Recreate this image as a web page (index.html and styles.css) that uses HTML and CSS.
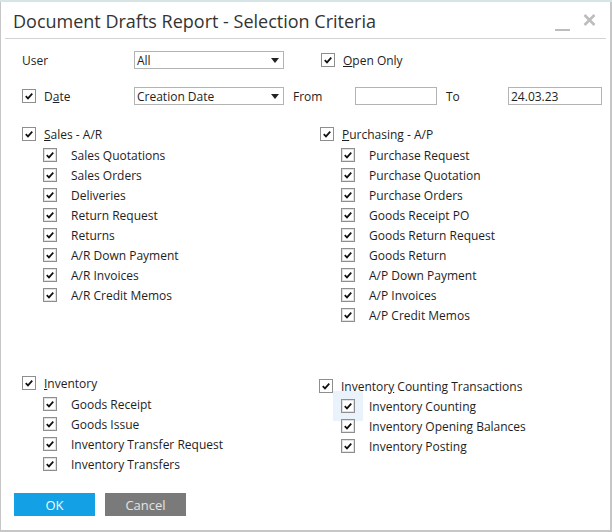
FILE: index.html
```html
<!DOCTYPE html>
<html>
<head>
<meta charset="utf-8">
<link rel="stylesheet" href="styles.css">
</head>
<body>
<div class="window">
  <div class="titlebar">
    <div class="title">Document Drafts Report - Selection Criteria</div>
    <div class="controls">
      <svg class="min" width="15" height="4" viewBox="0 0 15 4"><path d="M0 2h15"/></svg>
      <svg class="close" width="13" height="12" viewBox="0 0 13 12"><path d="M1.5 1l10 10M11.5 1l-10 10"/></svg>
    </div>
  </div>
  <div class="sep"></div>
  <div class="content">
    <div class="field-row row1">
      <span class="lead">User</span>
      <div class="select"><span>All</span><i class="arrow"></i></div>
      <div class="chk open-only"><span class="cb"><svg viewBox="0 0 14 14"><path d="M3.2 7.2l2.6 2.6 5-5.6"/></svg></span><span><u>O</u>pen Only</span></div>
    </div>
    <div class="field-row row2">
      <div class="lead chk"><span class="cb"><svg viewBox="0 0 14 14"><path d="M3.2 7.2l2.6 2.6 5-5.6"/></svg></span><span>D<u>a</u>te</span></div>
      <div class="select"><span>Creation Date</span><i class="arrow"></i></div>
      <span class="lbl">From</span>
      <div class="input from"></div>
      <span class="lbl">To</span>
      <div class="input to">24.03.23</div>
    </div>

    <div class="sections">
      <div class="group">
        <div class="chk head"><span class="cb"><svg viewBox="0 0 14 14"><path d="M3.2 7.2l2.6 2.6 5-5.6"/></svg></span><span><u>S</u>ales - A/R</span></div>
        <div class="items">
          <div class="chk item"><span class="cb sub"><svg viewBox="0 0 14 14"><path d="M3.2 7.2l2.6 2.6 5-5.6"/></svg></span><span>Sales Quotations</span></div>
          <div class="chk item"><span class="cb sub"><svg viewBox="0 0 14 14"><path d="M3.2 7.2l2.6 2.6 5-5.6"/></svg></span><span>Sales Orders</span></div>
          <div class="chk item"><span class="cb sub"><svg viewBox="0 0 14 14"><path d="M3.2 7.2l2.6 2.6 5-5.6"/></svg></span><span>Deliveries</span></div>
          <div class="chk item"><span class="cb sub"><svg viewBox="0 0 14 14"><path d="M3.2 7.2l2.6 2.6 5-5.6"/></svg></span><span>Return Request</span></div>
          <div class="chk item"><span class="cb sub"><svg viewBox="0 0 14 14"><path d="M3.2 7.2l2.6 2.6 5-5.6"/></svg></span><span>Returns</span></div>
          <div class="chk item"><span class="cb sub"><svg viewBox="0 0 14 14"><path d="M3.2 7.2l2.6 2.6 5-5.6"/></svg></span><span>A/R Down Payment</span></div>
          <div class="chk item"><span class="cb sub"><svg viewBox="0 0 14 14"><path d="M3.2 7.2l2.6 2.6 5-5.6"/></svg></span><span>A/R Invoices</span></div>
          <div class="chk item"><span class="cb sub"><svg viewBox="0 0 14 14"><path d="M3.2 7.2l2.6 2.6 5-5.6"/></svg></span><span>A/R Credit Memos</span></div>
        </div>
      </div>
      <div class="group right">
        <div class="chk head"><span class="cb"><svg viewBox="0 0 14 14"><path d="M3.2 7.2l2.6 2.6 5-5.6"/></svg></span><span><u>P</u>urchasing - A/P</span></div>
        <div class="items">
          <div class="chk item"><span class="cb sub"><svg viewBox="0 0 14 14"><path d="M3.2 7.2l2.6 2.6 5-5.6"/></svg></span><span>Purchase Request</span></div>
          <div class="chk item"><span class="cb sub"><svg viewBox="0 0 14 14"><path d="M3.2 7.2l2.6 2.6 5-5.6"/></svg></span><span>Purchase Quotation</span></div>
          <div class="chk item"><span class="cb sub"><svg viewBox="0 0 14 14"><path d="M3.2 7.2l2.6 2.6 5-5.6"/></svg></span><span>Purchase Orders</span></div>
          <div class="chk item"><span class="cb sub"><svg viewBox="0 0 14 14"><path d="M3.2 7.2l2.6 2.6 5-5.6"/></svg></span><span>Goods Receipt PO</span></div>
          <div class="chk item"><span class="cb sub"><svg viewBox="0 0 14 14"><path d="M3.2 7.2l2.6 2.6 5-5.6"/></svg></span><span>Goods Return Request</span></div>
          <div class="chk item"><span class="cb sub"><svg viewBox="0 0 14 14"><path d="M3.2 7.2l2.6 2.6 5-5.6"/></svg></span><span>Goods Return</span></div>
          <div class="chk item"><span class="cb sub"><svg viewBox="0 0 14 14"><path d="M3.2 7.2l2.6 2.6 5-5.6"/></svg></span><span>A/P Down Payment</span></div>
          <div class="chk item"><span class="cb sub"><svg viewBox="0 0 14 14"><path d="M3.2 7.2l2.6 2.6 5-5.6"/></svg></span><span>A/P Invoices</span></div>
          <div class="chk item"><span class="cb sub"><svg viewBox="0 0 14 14"><path d="M3.2 7.2l2.6 2.6 5-5.6"/></svg></span><span>A/P Credit Memos</span></div>
        </div>
      </div>
      <div class="group">
        <div class="chk head"><span class="cb"><svg viewBox="0 0 14 14"><path d="M3.2 7.2l2.6 2.6 5-5.6"/></svg></span><span><u>I</u>nventory</span></div>
        <div class="items">
          <div class="chk item"><span class="cb sub"><svg viewBox="0 0 14 14"><path d="M3.2 7.2l2.6 2.6 5-5.6"/></svg></span><span>Goods Receipt</span></div>
          <div class="chk item"><span class="cb sub"><svg viewBox="0 0 14 14"><path d="M3.2 7.2l2.6 2.6 5-5.6"/></svg></span><span>Goods Issue</span></div>
          <div class="chk item"><span class="cb sub"><svg viewBox="0 0 14 14"><path d="M3.2 7.2l2.6 2.6 5-5.6"/></svg></span><span>Inventory Transfer Request</span></div>
          <div class="chk item"><span class="cb sub"><svg viewBox="0 0 14 14"><path d="M3.2 7.2l2.6 2.6 5-5.6"/></svg></span><span>Inventory Transfers</span></div>
        </div>
      </div>
      <div class="group right lower">
        <div class="chk head"><span class="cb"><svg viewBox="0 0 14 14"><path d="M3.2 7.2l2.6 2.6 5-5.6"/></svg></span><span>Inventor<u>y</u> Counting Transactions</span></div>
        <div class="items">
          <div class="chk item focus"><span class="cb sub"><svg viewBox="0 0 14 14"><path d="M3.2 7.2l2.6 2.6 5-5.6"/></svg></span><span>Inventory Counting</span></div>
          <div class="chk item"><span class="cb sub"><svg viewBox="0 0 14 14"><path d="M3.2 7.2l2.6 2.6 5-5.6"/></svg></span><span>Inventory Opening Balances</span></div>
          <div class="chk item"><span class="cb sub"><svg viewBox="0 0 14 14"><path d="M3.2 7.2l2.6 2.6 5-5.6"/></svg></span><span>Inventory Posting</span></div>
        </div>
      </div>
    </div>

    <div class="buttons">
      <div class="btn ok">OK</div>
      <div class="btn cancel">Cancel</div>
    </div>
  </div>
</div>
</body>
</html>
```

FILE: styles.css
```css
* { box-sizing: border-box; }
html, body { margin: 0; padding: 0; }
body {
  width: 612px;
  height: 532px;
  background: #d4e4e7;
  font-family: "Open Sans", "Noto Sans", sans-serif;
  font-size: 12px;
  color: #1e1e1e;
  overflow: hidden;
}
.window {
  margin-top: 2px;
  width: 612px;
  height: 530px;
  background: #fff;
  border-left: 1px solid #c6c6c6;
  border-right: 2px solid #c6c6c6;
  border-bottom: 2px solid #c6c6c6;
  display: flex;
  flex-direction: column;
}
.titlebar {
  height: 36px;
  display: flex;
  align-items: center;
  justify-content: space-between;
  padding: 0 14px 0 12px;
}
.title {
  font-size: 18px;
  color: #333;
  padding-top: 2px;
}
.controls {
  display: flex;
  align-items: center;
  gap: 13px;
}
.controls svg { fill: none; stroke: #bdbdbd; }
.min { stroke-width: 2; margin-top: 20px; }
.close { stroke-width: 2.6; margin-top: 0; }
.sep {
  height: 1px;
  background: #d2d2d2;
  margin: 0 4px 0 4px;
}
.content {
  padding-left: 21px;
  display: flex;
  flex-direction: column;
}
.field-row {
  display: flex;
  align-items: center;
  height: 18px;
}
.row1 { margin-top: 12px; }
.row2 { margin-top: 18px; }
.lead { width: 112px; flex: none; }
.select {
  width: 150px;
  height: 18px;
  border: 1px solid #b4b4b4;
  display: flex;
  align-items: center;
  justify-content: space-between;
  padding: 0 4px 0 2px;
  background: #fff;
}
.arrow {
  width: 0;
  height: 0;
  border-left: 4px solid transparent;
  border-right: 4px solid transparent;
  border-top: 5px solid #222;
}
.open-only { margin-left: 37px; }
.lbl { margin-left: 9px; width: 62px; }
.input {
  height: 18px;
  border: 1px solid #b4b4b4;
  padding: 0 2px;
  display: flex;
  align-items: center;
}
.input.from { width: 82px; }
.input.to { width: 94px; }
.chk {
  display: flex;
  align-items: center;
}
.cb {
  width: 14px;
  height: 14px;
  flex: none;
  border: 1px solid #8e8e8e;
  background: #fff;
  margin-right: 8px;
  display: flex;
  align-items: center;
  justify-content: center;
}
.cb svg {
  width: 12px;
  height: 12px;
  fill: none;
  stroke: #111;
  stroke-width: 2;
}
.cb.sub {
  box-shadow: inset 0 0 0 1px #e2e2e2;
  margin-right: 14px;
}
.sections {
  margin-top: 19px;
  display: grid;
  grid-template-columns: 298px 1fr;
  grid-template-rows: 249px auto;
}
.group .head { height: 20px; }
.items { padding-left: 21px; margin-top: 1px; }
.item { height: 20px; }
.group.lower { margin-top: 3px; }
.group.lower .items { margin-top: 0; }
.group.lower .head { margin-left: -1px; }
.item.focus .cb { outline: 8px solid #eaf2fb; outline-offset: 0; }
.buttons {
  margin-top: 19px;
  display: flex;
  gap: 10px;
  margin-left: -8px;
}
.btn {
  width: 81px;
  height: 23px;
  display: flex;
  align-items: center;
  justify-content: center;
  font-size: 13px;
}
.ok { background: #13a0e4; color: #f4fbff; }
.cancel { background: #7a7a7a; color: #e4e4e4; }
```
